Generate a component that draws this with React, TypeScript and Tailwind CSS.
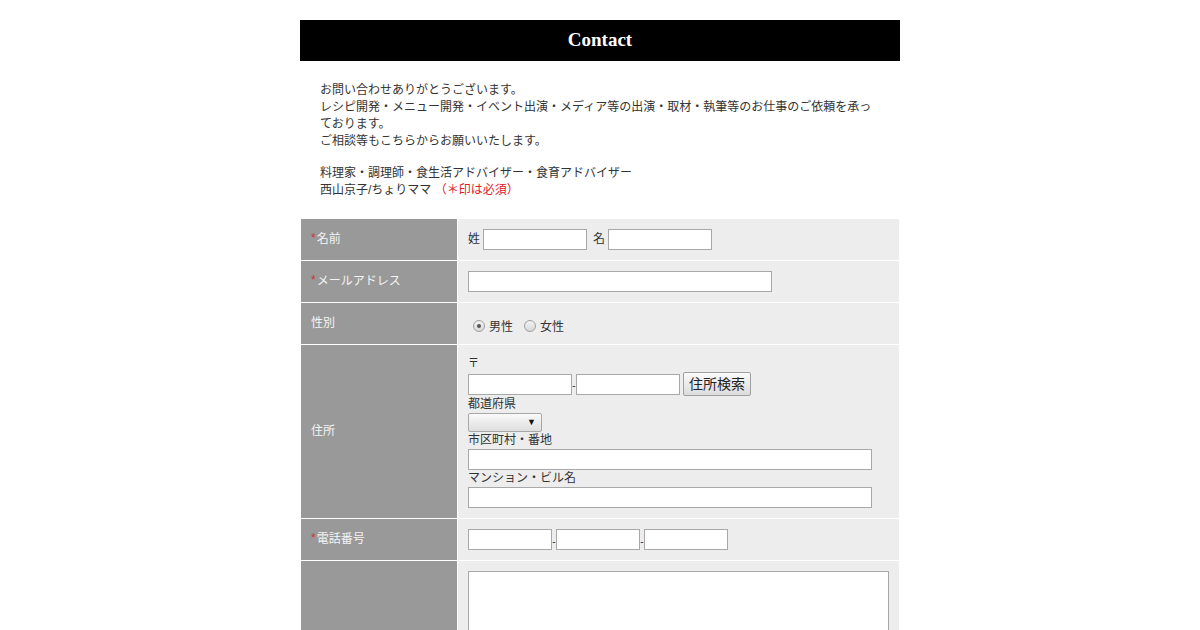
import * as React from 'react'

const jp = "font-['Liberation_Sans','Noto_Sans_CJK_JP',sans-serif]"

function Req() {
  return <span className="text-[#d0303a] text-[12px] mr-[1px] relative top-[-1px]">*</span>
}

function Field({ w, className = '' }: { w: string; className?: string }) {
  return <span className={`inline-block align-middle h-[21px] ${w} border border-[#a8a8a8] bg-white ${className}`} />
}

function Dash() {
  return <span className="w-[4px] text-center text-[10px] mt-[4px] leading-none">-</span>
}

function Radio({ checked }: { checked?: boolean }) {
  return (
    <span className="inline-flex items-center justify-center w-[12px] h-[12px] rounded-full border border-[#a0a0a0] bg-gradient-to-b from-[#f4f4f4] to-[#d8d8d8] ml-[5px] mr-[4px] mt-[1px]">
      {checked && <span className="w-[4px] h-[4px] rounded-full bg-[#555]" />}
    </span>
  )
}

function Row({ label, req, children }: { label: string; req?: boolean; children?: React.ReactNode }) {
  return (
    <tr>
      <td className="w-[156px] bg-[#999999] text-[#f4f4f4] pl-[10px] align-middle">
        {req && <Req />}
        {label}
      </td>
      <td className="bg-[#ededed] p-[10px] align-top">{children}</td>
    </tr>
  )
}

export default function App() {
  return (
    <div className={`bg-white min-h-[630px] pt-[20px] text-[12px] leading-[17px] text-[#333] ${jp}`}>
      <div className="w-[600px] mx-auto">
        <div className="h-[41px] bg-black flex items-center justify-center">
          <h1 className="text-white font-bold text-[19px] font-['Liberation_Serif',serif] -mt-[2px]">Contact</h1>
        </div>

        <div className="px-[20px] pt-[21px]">
          <p>
            お問い合わせありがとうございます。<br />
            レシピ開発・メニュー開発・イベント出演・メディア等の出演・取材・執筆等のお仕事のご依頼を承っております。<br />
            ご相談等もこちらからお願いいたします。
          </p>
          <p className="mt-[15px]">
            料理家・調理師・食生活アドバイザー・食育アドバイザー<br />
            西山京子/ちょりママ <span className="text-[#e0202a]">（＊印は必須）</span>
          </p>
        </div>

        <table className="mt-[19px] w-[600px] border-separate border-spacing-[1px]">
          <tbody>
            <Row label="名前" req>
              <div className="h-[21px] flex items-center">
                <span className="mr-[3px]">姓</span>
                <Field w="w-[104px]" />
                <span className="ml-[6px] mr-[3px]">名</span>
                <Field w="w-[104px]" />
              </div>
            </Row>
            <Row label="メールアドレス" req>
              <div className="h-[21px] flex items-center">
                <Field w="w-[304px]" />
              </div>
            </Row>
            <Row label="性別">
              <div className="h-[21px] flex items-center pt-[3px]">
                <Radio checked />
                <span className="mt-[4px]">男性</span>
                <span className="w-[6px]" />
                <Radio />
                <span className="mt-[4px]">女性</span>
              </div>
            </Row>
            <Row label="住所">
              <div className="h-[17px] text-[11px]">〒</div>
              <div className="h-[24px] flex items-center">
                <Field w="w-[104px]" />
                <Dash />
                <Field w="w-[104px]" />
                <span className="ml-[3px] h-[24px] w-[68px] flex items-center justify-center text-[14px] text-[#222] border border-[#a0a0a0] rounded-[2px] bg-gradient-to-b from-[#fafafa] to-[#dcdcdc]">
                  住所検索
                </span>
              </div>
              <div className="h-[17px]">都道府県</div>
              <div className="h-[19px]">
                <span className="inline-flex items-center justify-end pr-[5px] h-[19px] w-[74px] border border-[#a8a8a8] rounded-[2px] bg-gradient-to-b from-[#fafafa] to-[#dedede] text-[9px] text-[#111]">
                  ▼
                </span>
              </div>
              <div className="h-[17px]">市区町村・番地</div>
              <div className="h-[21px] flex"><Field w="w-[404px]" /></div>
              <div className="h-[17px]">マンション・ビル名</div>
              <div className="h-[21px] flex"><Field w="w-[404px]" /></div>
            </Row>
            <Row label="電話番号" req>
              <div className="h-[21px] flex items-center">
                <Field w="w-[84px]" />
                <Dash />
                <Field w="w-[84px]" />
                <Dash />
                <Field w="w-[84px]" />
              </div>
            </Row>
            <Row label="">
              <div className="h-[160px] w-[421px] border border-[#a8a8a8] bg-white" />
            </Row>
          </tbody>
        </table>
      </div>
    </div>
  )
}
